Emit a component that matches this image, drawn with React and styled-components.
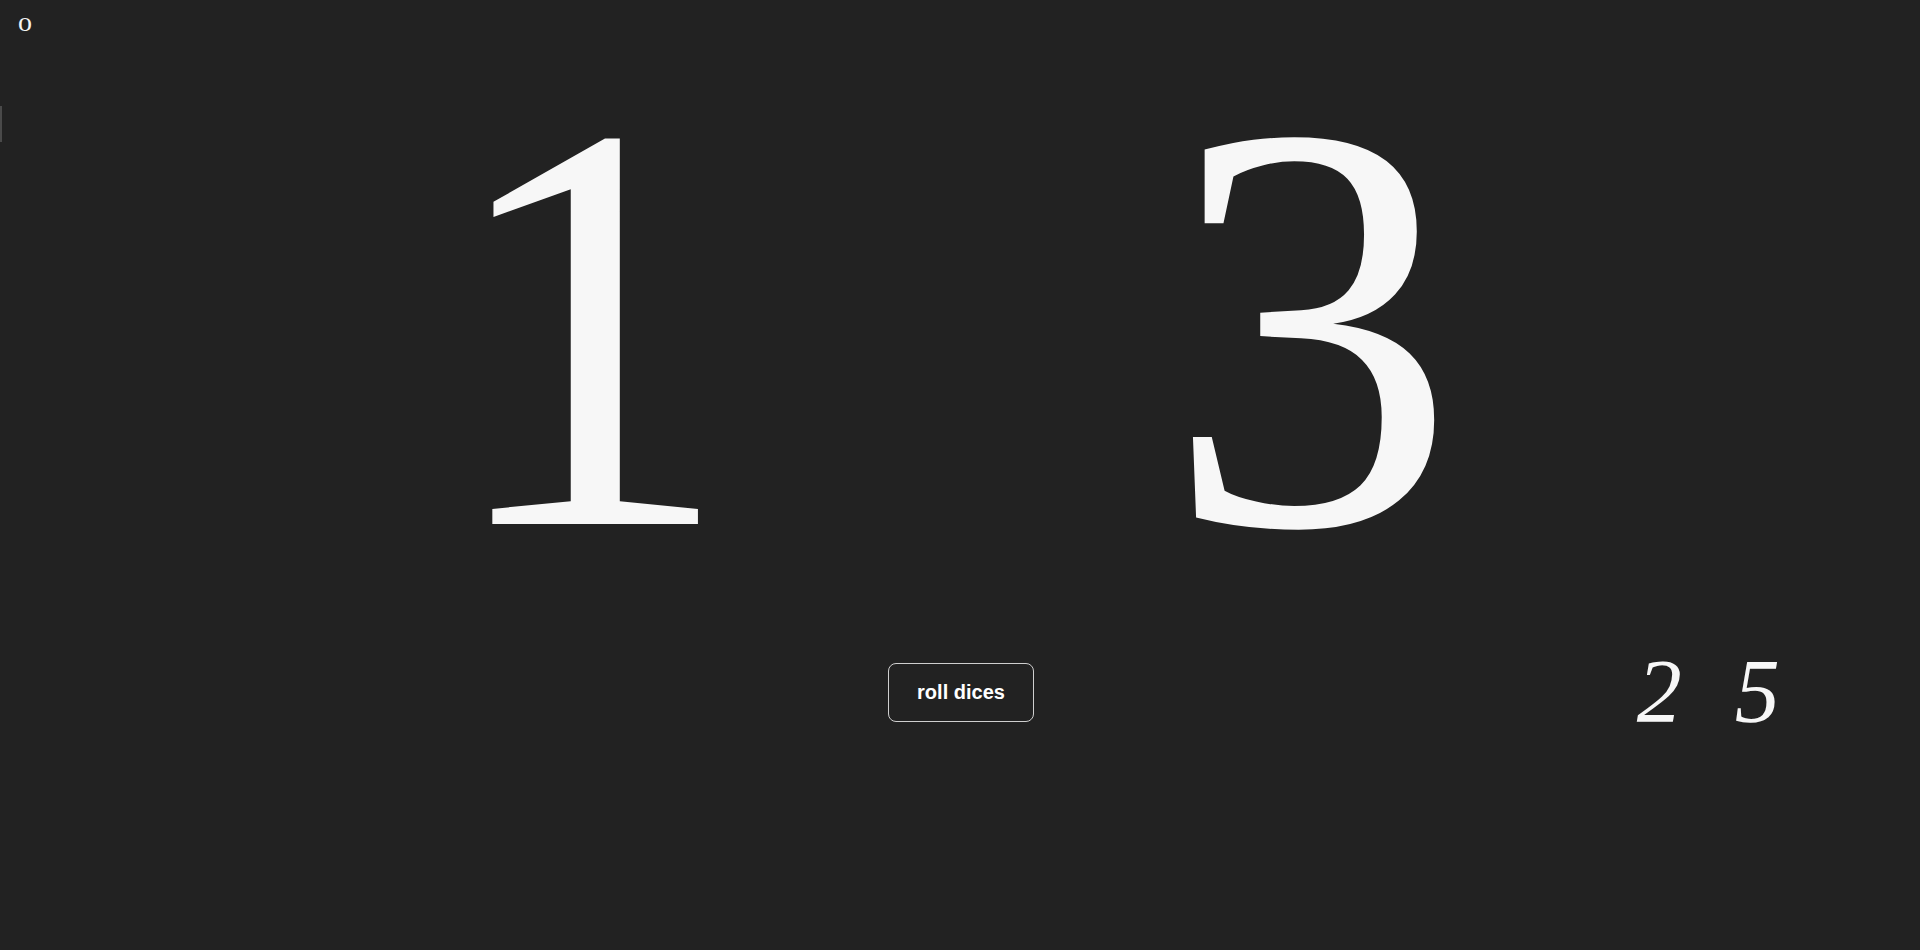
import React from "react";
import styled, { createGlobalStyle } from "styled-components";

const Global = createGlobalStyle`
  html, body { margin: 0; padding: 0; background: #222222; }
  body { font-family: "Liberation Serif", "Times New Roman", serif; color: #f7f7f7; }
`;

const Page = styled.div`
  display: flex;
  min-height: 100vh;
  background: #222222;
`;

const Rail = styled.div`
  width: 2px;
  flex: none;
  display: flex;
  flex-direction: column;
`;

const RailThumb = styled.div`
  margin-top: 106px;
  height: 36px;
  background: #4a4a4a;
`;

const Main = styled.main`
  flex: 1;
  display: flex;
  flex-direction: column;
`;

const Header = styled.div`
  padding: 6px 0 0 16px;
  font-size: 28px;
  line-height: 32px;
  color: #f4f4f4;
`;

const DiceRow = styled.div`
  margin-top: 4px;
  display: flex;
  justify-content: center;
  gap: 432px;
  padding-right: 24px;
`;

const BigDie = styled.div`
  width: 292px;
  text-align: center;
  font-size: 584px;
  line-height: 570px;
  color: #f7f7f7;
`;

const Controls = styled.div`
  margin-top: 35px;
  display: grid;
  grid-template-columns: 1fr 1fr 1fr;
  align-items: center;
  height: 80px;
`;

const Center = styled.div`
  display: flex;
  justify-content: center;
`;

const RollButton = styled.button`
  width: 146px;
  height: 59px;
  border: 1px solid #cfcfcf;
  border-radius: 8px;
  background: transparent;
  color: #ffffff;
  font-family: "Liberation Sans", Arial, sans-serif;
  font-weight: 700;
  font-size: 20px;
  cursor: pointer;
  padding: 0;
`;

const History = styled.div`
  display: flex;
  gap: 53px;
  padding-left: 356px;
`;

const SmallDie = styled.span`
  font-style: italic;
  font-size: 90px;
  line-height: 90px;
  color: #f7f7f7;
`;

export default function App() {
  const dice = [1, 3];
  const previous = [2, 5];
  return (
    <>
      <Global />
      <Page>
        <Rail>
          <RailThumb />
        </Rail>
        <Main>
          <Header>o</Header>
          <DiceRow>
            {dice.map((d, i) => (
              <BigDie key={i}>{d}</BigDie>
            ))}
          </DiceRow>
          <Controls>
            <div />
            <Center>
              <RollButton>roll dices</RollButton>
            </Center>
            <History>
              {previous.map((d, i) => (
                <SmallDie key={i}>{d}</SmallDie>
              ))}
            </History>
          </Controls>
        </Main>
      </Page>
    </>
  );
}
